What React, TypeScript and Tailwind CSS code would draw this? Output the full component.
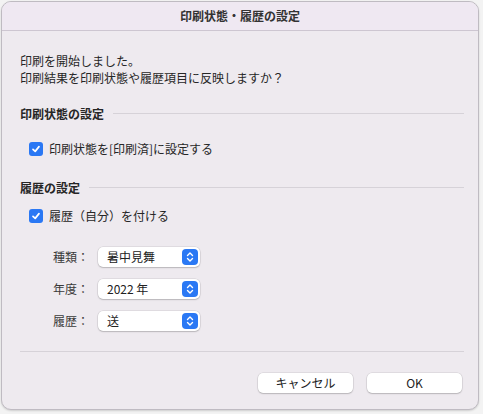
import React from 'react'

const font = { fontFamily: '"Noto Sans CJK JP", "Noto Sans", sans-serif' }

function Checkbox() {
  return (
    <span className="flex h-[14px] w-[14px] shrink-0 items-center justify-center rounded-[3px] bg-[#2a78f4]">
      <svg width="10" height="10" viewBox="0 0 10 10" fill="none">
        <path d="M2 5.3 L4.2 7.4 L8 2.6" stroke="white" strokeWidth="1.7" strokeLinecap="round" strokeLinejoin="round" />
      </svg>
    </span>
  )
}

function Stepper() {
  return (
    <span className="flex h-[16px] w-[16px] items-center justify-center rounded-[4px] bg-[#2a78f4]">
      <svg width="8" height="12" viewBox="0 0 8 12" fill="none">
        <path d="M1.5 4.5 L4 2 L6.5 4.5" stroke="white" strokeWidth="1.4" strokeLinecap="round" strokeLinejoin="round" />
        <path d="M1.5 7.5 L4 10 L6.5 7.5" stroke="white" strokeWidth="1.4" strokeLinecap="round" strokeLinejoin="round" />
      </svg>
    </span>
  )
}

function SectionHeader({ title }: { title: string }) {
  return (
    <div className="flex items-center gap-[9px]">
      <span className="text-[12px] leading-[17px] font-bold text-[#262626]">{title}</span>
      <span className="h-px flex-1 bg-[#d6d2d8]" />
    </div>
  )
}

const rows = [
  { label: '種類：', value: '暑中見舞' },
  { label: '年度：', value: '2022 年' },
  { label: '履歴：', value: '送' },
]

export default function App() {
  return (
    <div className="h-[414px] w-[483px] bg-[#f3f3f3] pt-px pl-px" style={font}>
      <div className="flex h-[409px] w-[478px] flex-col overflow-hidden rounded-[10px] border border-[#bfbbc2] bg-[#eeeaef] shadow-[0_1px_2px_rgba(0,0,0,0.15)]">
        {/* Title bar */}
        <div className="flex h-[29px] shrink-0 items-center justify-center border-b border-[#cdc6d1] bg-[#efe8f2] text-[12px] font-bold text-[#333]">
          印刷状態・履歴の設定
        </div>

        <div className="flex flex-col pr-[14px] pl-[18px]">
          {/* Message */}
          <p className="mt-[21px] text-[12px] leading-[17px] text-[#262626]">
            印刷を開始しました。
            <br />
            印刷結果を印刷状態や履歴項目に反映しますか？
          </p>

          {/* Print state */}
          <div className="mt-[19px]">
            <SectionHeader title="印刷状態の設定" />
          </div>
          <label className="mt-[18px] ml-[9px] flex items-center gap-[6px] text-[12px] leading-[17px] text-[#262626]">
            <Checkbox />
            印刷状態を[印刷済]に設定する
          </label>

          {/* History */}
          <div className="mt-[22px]">
            <SectionHeader title="履歴の設定" />
          </div>
          <label className="mt-[11px] ml-[9px] flex items-center gap-[6px] text-[12px] leading-[17px] text-[#262626]">
            <Checkbox />
            履歴（自分）を付ける
          </label>

          <div className="mt-[23px] flex flex-col gap-[12px]">
            {rows.map(r => (
              <div key={r.label} className="flex items-center">
                <span className="ml-[33px] w-[45px] text-[12px] text-[#3a3a3a]">{r.label}</span>
                <div className="flex h-[20px] w-[102px] items-center justify-between rounded-[5px] bg-white pr-[2px] pl-[9px] text-[12px] text-[#222] shadow-[0_0_0_0.5px_rgba(0,0,0,0.12),0_1px_1.5px_rgba(0,0,0,0.18)]">
                  <span>{r.value}</span>
                  <Stepper />
                </div>
              </div>
            ))}
          </div>

          {/* Separator */}
          <div className="mt-[20px] h-px bg-[#d6d2d8]" />

          {/* Buttons */}
          <div className="mt-[21px] mr-[2px] flex justify-end gap-[14px]">
            <button className="flex h-[20px] w-[95px] items-center justify-center rounded-[5px] bg-white text-[12px] text-[#222] shadow-[0_0_0_0.5px_rgba(0,0,0,0.12),0_1px_1.5px_rgba(0,0,0,0.18)]">
              キャンセル
            </button>
            <button className="flex h-[20px] w-[95px] items-center justify-center rounded-[5px] bg-white text-[12px] text-[#222] shadow-[0_0_0_0.5px_rgba(0,0,0,0.12),0_1px_1.5px_rgba(0,0,0,0.18)]">
              OK
            </button>
          </div>
        </div>
      </div>
    </div>
  )
}
